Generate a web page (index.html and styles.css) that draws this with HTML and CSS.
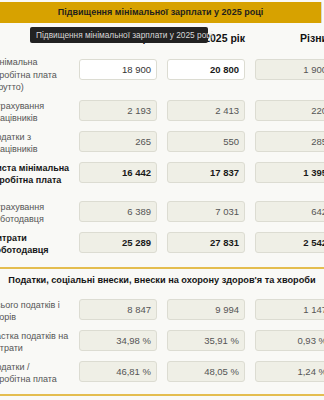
FILE: index.html
```html
<!DOCTYPE html>
<html lang="uk">
<head>
<meta charset="utf-8">
<link rel="stylesheet" href="styles.css">
</head>
<body>
<div class="widget">
  <h1 class="title">Підвищення мінімальної зарплати у 2025 році</h1>
  <div class="table">
    <div class="row head">
      <span></span>
      <span class="h">2024 рік</span>
      <span class="h">2025 рік</span>
      <span class="h diff">Різниця</span>
    </div>
    <div class="row first">
      <div class="lbl">Мінімальна<br>заробітна плата<br>(брутто)</div>
      <div class="val edit">18 900</div>
      <div class="val edit strong">20 800</div>
      <div class="val">1 900</div>
    </div>
    <div class="row">
      <div class="lbl">Страхування<br>працівників</div>
      <div class="val">2 193</div>
      <div class="val">2 413</div>
      <div class="val">220</div>
    </div>
    <div class="row">
      <div class="lbl">Податки з<br>працівників</div>
      <div class="val">265</div>
      <div class="val">550</div>
      <div class="val">285</div>
    </div>
    <div class="row bold">
      <div class="lbl">Чиста мінімальна<br>заробітна плата</div>
      <div class="val strong">16 442</div>
      <div class="val strong">17 837</div>
      <div class="val strong">1 395</div>
    </div>
    <div class="row spaced">
      <div class="lbl">Страхування<br>роботодавця</div>
      <div class="val">6 389</div>
      <div class="val">7 031</div>
      <div class="val">642</div>
    </div>
    <div class="row bold">
      <div class="lbl">Витрати<br>роботодавця</div>
      <div class="val strong">25 289</div>
      <div class="val strong">27 831</div>
      <div class="val strong">2 542</div>
    </div>
  </div>
  <div class="section">
    <h2 class="subtitle">Податки, соціальні внески, внески на охорону здоров'я та хвороби</h2>
    <div class="table">
      <div class="row">
        <div class="lbl">Всього податків і<br>зборів</div>
        <div class="val">8 847</div>
        <div class="val">9 994</div>
        <div class="val">1 147</div>
      </div>
      <div class="row">
        <div class="lbl">Частка податків на<br>витрати</div>
        <div class="val">34,98 %</div>
        <div class="val">35,91 %</div>
        <div class="val">0,93 %</div>
      </div>
      <div class="row">
        <div class="lbl">Податки /<br>заробітна плата</div>
        <div class="val">46,81 %</div>
        <div class="val">48,05 %</div>
        <div class="val">1,24 %</div>
      </div>
    </div>
  </div>
  <div class="tip">Підвищення мінімальної зарплати у 2025 році</div>
</div>
</body>
</html>
```
FILE: styles.css
```css
html, body {
  margin: 0;
  padding: 0;
  overflow: hidden;
  background: #f9f9f6;
}
body {
  font-family: "Liberation Sans", Arial, sans-serif;
  color: #333;
}
.widget {
  position: relative;
  width: 322px;
  padding-top: 2px;
}
.title {
  margin: 0;
  height: 21px;
  line-height: 21px;
  background: #d7a200;
  color: #1e1e1e;
  font-size: 9px;
  font-weight: bold;
  text-align: center;
  border-right: 1px solid #d6d6d0;
}
.table {
  margin-left: -10px;
  width: 350px;
}
.row {
  display: grid;
  grid-template-columns: 79px 78px 78px 78px;
  column-gap: 10px;
  align-items: center;
  padding: 3px 0;
}
.row.head {
  padding: 8px 0 8px;
  align-items: start;
}
.h {
  font-size: 10.5px;
  line-height: 14px;
  font-weight: bold;
  color: #111;
  text-align: right;
}
.h.diff {
  text-align: left;
  padding-left: 45px;
  white-space: nowrap;
}
.lbl {
  font-size: 9px;
  line-height: 12.5px;
  color: #555;
  white-space: nowrap;
}
.row.bold .lbl {
  font-weight: bold;
  color: #151515;
}
.row.spaced {
  margin-top: 8px;
}
.val {
  box-sizing: border-box;
  height: 21px;
  line-height: 19px;
  border: 1px solid #dcdcd2;
  border-radius: 3px;
  background: #efefe6;
  text-align: right;
  padding-right: 5px;
  font-size: 9.5px;
  color: #555;
  margin-bottom: 4px;
}
.row.first .val {
  margin-bottom: 10px;
}
.val.edit {
  background: #ffffff;
  color: #333;
}
.val.strong {
  font-weight: bold;
  color: #1a1a1a;
}
.section {
  margin-top: 7px;
  width: 324px;
  border-top: 2px solid #e4bd4f;
  border-bottom: 2px solid #e4bd4f;
  padding-bottom: 5px;
}
.subtitle {
  margin: 0;
  padding: 5px 0 10px;
  font-size: 9.2px;
  line-height: 12px;
  font-weight: bold;
  text-align: center;
  color: #151515;
}
.tip {
  position: absolute;
  left: 30px;
  top: 27px;
  width: 178px;
  height: 16px;
  line-height: 16px;
  box-sizing: border-box;
  padding-left: 6px;
  background: #222;
  color: #d8d8d8;
  font-size: 8.3px;
  border-radius: 2px;
  white-space: nowrap;
}
```
